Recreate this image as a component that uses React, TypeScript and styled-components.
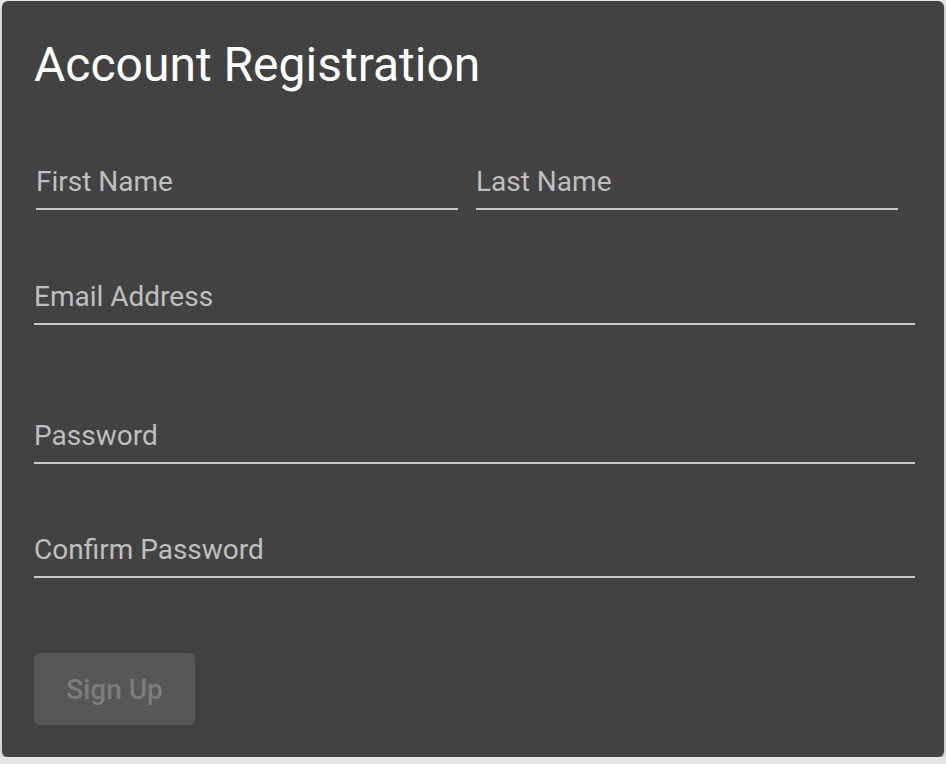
import styled, { createGlobalStyle } from 'styled-components';

const GlobalStyle = createGlobalStyle`
  html, body {
    margin: 0;
    padding: 0;
    background: #e4e4e4;
    font-family: Roboto, "Liberation Sans", Arial, sans-serif;
  }
`;

const Page = styled.div`
  padding: 1px 2px 0 2px;
`;

const Card = styled.form`
  background: #424242;
  border-radius: 6px;
  padding: 35px 29px 32px 32px;
  box-shadow: 0 2px 3px rgba(0, 0, 0, 0.25), 0 1px 1px rgba(0, 0, 0, 0.15);
`;

const Title = styled.h1`
  margin: 0;
  font-size: 48px;
  line-height: 58px;
  font-weight: 400;
  color: #ffffff;
`;

const NameRow = styled.div`
  display: grid;
  grid-template-columns: 1fr 1fr;
  column-gap: 18px;
  width: 862px;
  padding-left: 2px;
  margin-top: 75px;
`;

const Field = styled.label<{ $gap?: number }>`
  display: block;
  margin-top: ${(p) => p.$gap ?? 0}px;
  padding-bottom: 14px;
  border-bottom: 2px solid #c9c9c9;
  font-size: 28px;
  line-height: 25px;
  color: #bfbfbf;
`;

const Button = styled.button`
  display: block;
  margin-top: 75px;
  width: 161px;
  height: 72px;
  border: none;
  border-radius: 6px;
  background: #575757;
  color: #7c7c7c;
  font-family: Roboto, "Liberation Sans", Arial, sans-serif;
  font-size: 28px;
  font-weight: 500;
  cursor: default;
`;

export default function App() {
  return (
    <Page>
      <GlobalStyle />
      <Card onSubmit={(e) => e.preventDefault()}>
        <Title>Account Registration</Title>
        <NameRow>
          <Field>First Name</Field>
          <Field>Last Name</Field>
        </NameRow>
        <Field $gap={74}>Email Address</Field>
        <Field $gap={98}>Password</Field>
        <Field $gap={73}>Confirm Password</Field>
        <Button type="button" disabled>Sign Up</Button>
      </Card>
    </Page>
  );
}
